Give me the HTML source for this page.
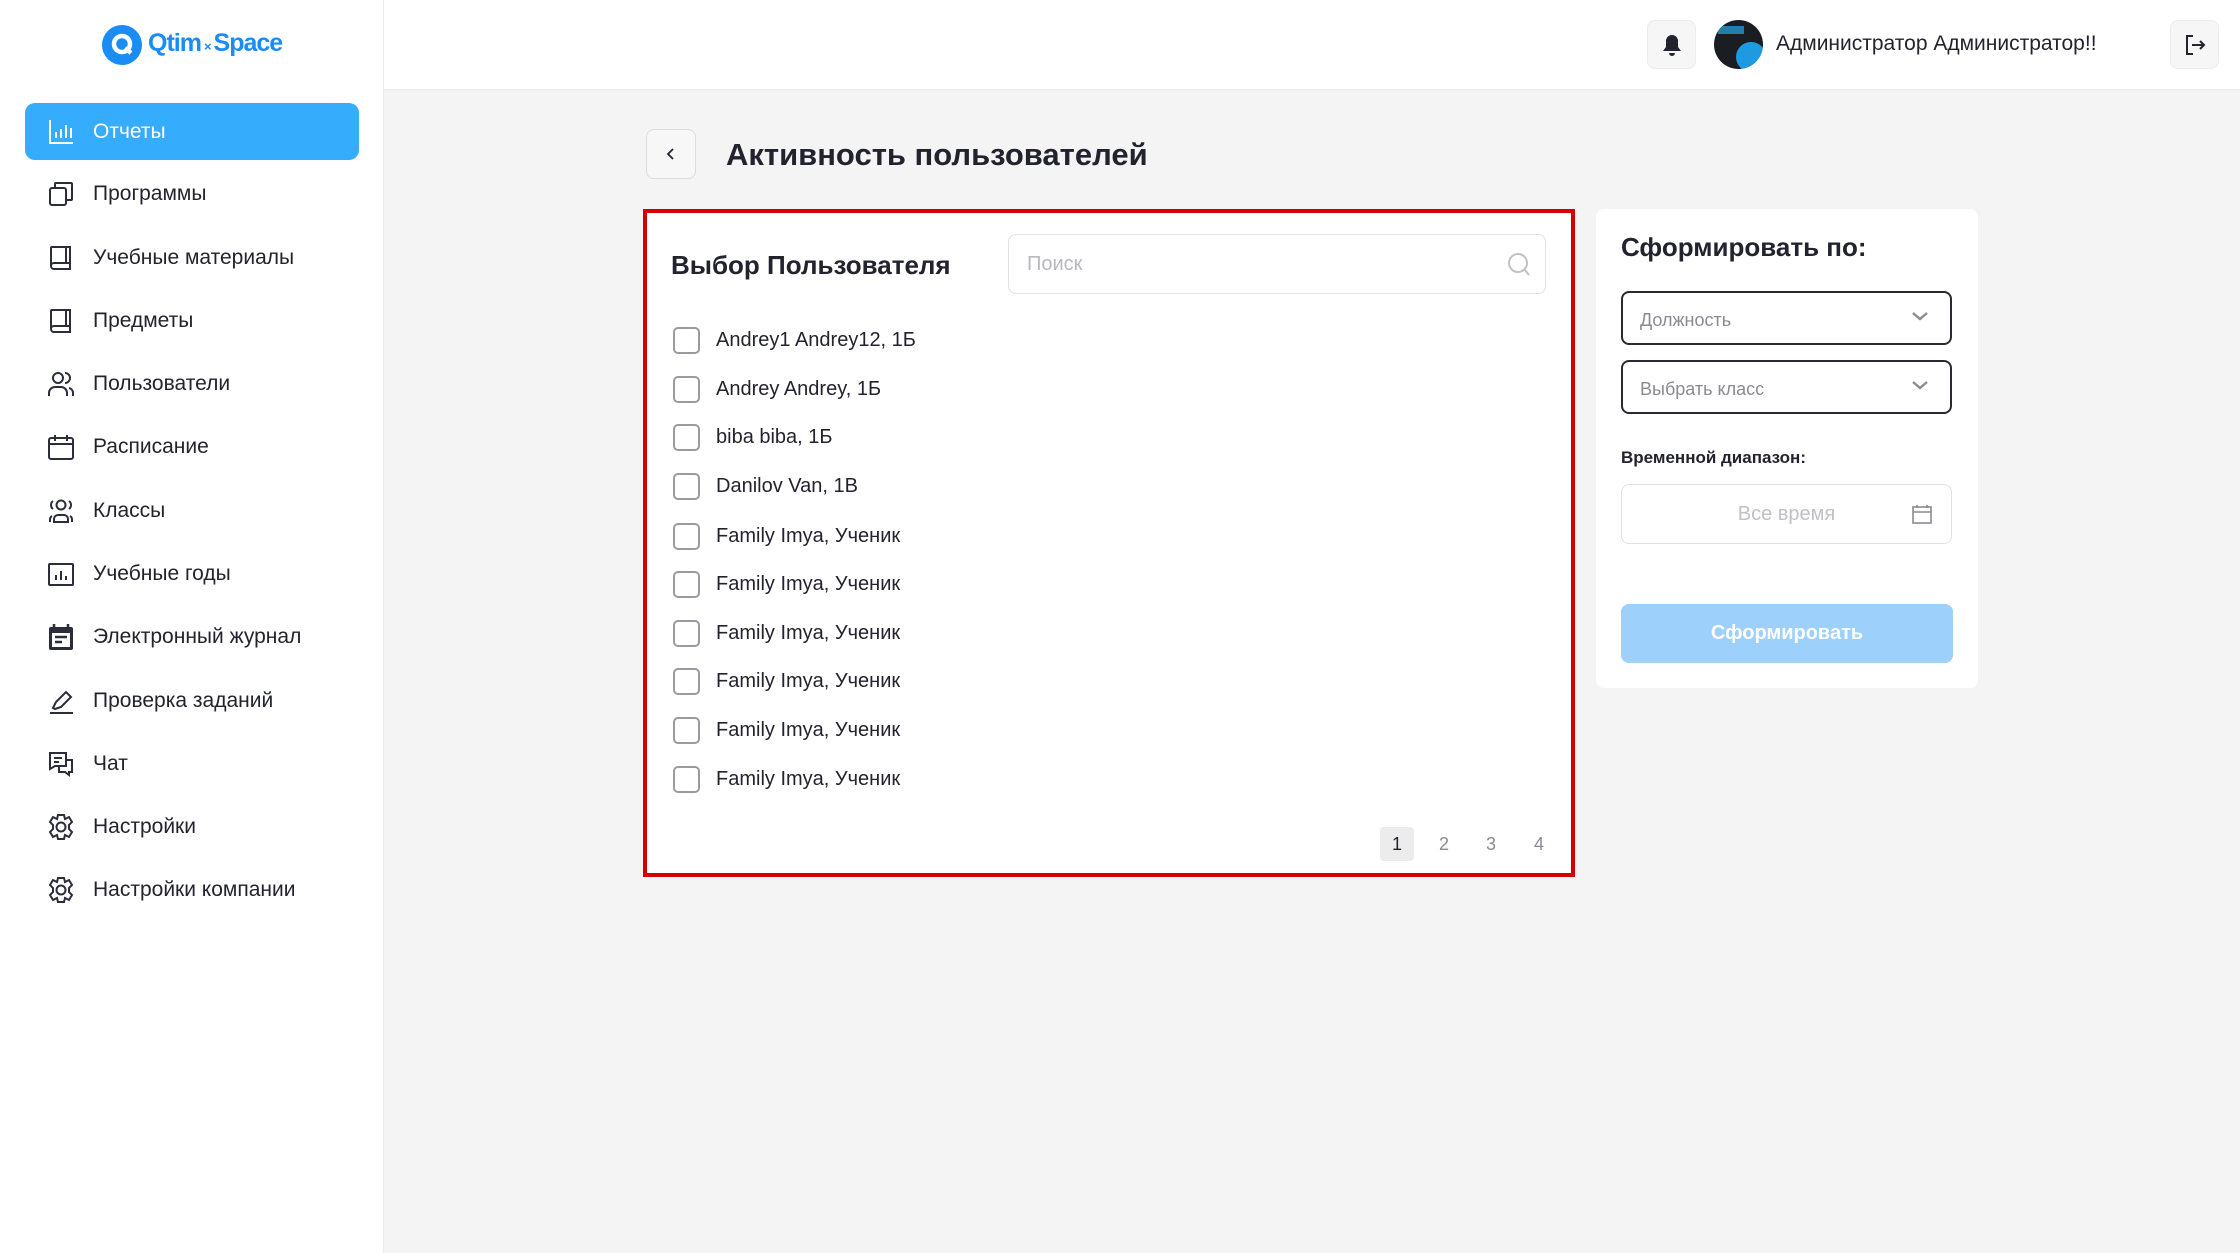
<!DOCTYPE html>
<html><head><meta charset="utf-8"><style>
*{margin:0;padding:0;box-sizing:border-box}
body{width:2240px;height:1253px;background:#f4f4f4;font-family:"Liberation Sans",sans-serif;color:#23232f;position:relative;overflow:hidden}
.abs{position:absolute}
.side{left:0;top:0;width:384px;height:1253px;background:#fff;border-right:1px solid #ececec}
.top{left:384px;top:0;width:1856px;height:90px;background:#fff;border-bottom:1px solid #ececec}
.mi{position:absolute;left:25px;width:334px;height:57px;display:flex;align-items:center;font-size:21px;color:#23232f}
.mi svg{position:absolute;left:22px;top:15px;width:28px;height:28px}
.mi span{position:absolute;left:68px}
.act{background:#35acfc;border-radius:10px;color:#fff}
.cb{position:absolute;left:673px;width:27px;height:27px;border:2px solid #9a9aa2;border-radius:5px;background:#fff}
.ct{position:absolute;left:716px;font-size:20px;color:#23232f}
.sel{position:absolute;left:1621px;width:331px;height:54px;border:2px solid #2a2a35;border-radius:8px;font-size:18px;color:#8a8a95;padding:17px 0 0 17px}
.sel svg{position:absolute;right:20px;top:16px}
.pg{position:absolute;top:827px;width:34px;height:34px;font-size:18px;color:#8a8a95;text-align:center;line-height:34px;border-radius:4px}
</style></head><body>
<div class="abs side">
  <svg class="abs" style="left:101px;top:24px" width="42" height="42" viewBox="0 0 42 42"><circle cx="21" cy="21" r="20" fill="#1a8cf5"/><circle cx="21" cy="20" r="8" fill="none" stroke="#fff" stroke-width="4.5"/><path d="M24 24 L30 29" stroke="#fff" stroke-width="4.5"/></svg>
  <div class="abs" style="left:148px;top:29px;font-size:25px;font-weight:bold;color:#1a8cf5;letter-spacing:-1px">Qtim<span style="font-size:13px;margin:0 3px">×</span>Space</div>
  <div class="mi act" style="top:103px"><svg viewBox="0 0 28 28" fill="none" stroke="#fff" stroke-width="2"><path d="M3 2v23h23M9 20v-6M14 20v-9M19 20v-13M24 20v-10"/></svg><span>Отчеты</span></div>
  <div class="mi" style="top:165px"><svg viewBox="0 0 28 28" fill="none" stroke="#2b2d3b" stroke-width="2"><rect x="3" y="8" width="16" height="17" rx="2"/><path d="M8 8V4a1 1 0 0 1 1-1h15a1 1 0 0 1 1 1v15a1 1 0 0 1-1 1h-5"/></svg><span>Программы</span></div>
  <div class="mi" style="top:229px"><svg viewBox="0 0 28 28" fill="none" stroke="#2b2d3b" stroke-width="2"><path d="M4 22V4a1 1 0 0 1 1-1h18v22H7a3 3 0 0 1-3-3zM4 22a3 3 0 0 1 3-3h16M19 3v16"/></svg><span>Учебные материалы</span></div>
  <div class="mi" style="top:292px"><svg viewBox="0 0 28 28" fill="none" stroke="#2b2d3b" stroke-width="2"><path d="M4 22V4a1 1 0 0 1 1-1h18v22H7a3 3 0 0 1-3-3zM4 22a3 3 0 0 1 3-3h16M19 3v16"/></svg><span>Предметы</span></div>
  <div class="mi" style="top:355px"><svg viewBox="0 0 28 28" fill="none" stroke="#2b2d3b" stroke-width="2"><circle cx="11" cy="8" r="5"/><path d="M2 26v-3a6 6 0 0 1 6-6h6a6 6 0 0 1 6 6v3M18 3a5 5 0 0 1 0 10M22 18a5 5 0 0 1 4 5v3"/></svg><span>Пользователи</span></div>
  <div class="mi" style="top:418px"><svg viewBox="0 0 28 28" fill="none" stroke="#2b2d3b" stroke-width="2"><rect x="2" y="5" width="24" height="21" rx="2"/><path d="M2 11h24M8 2v6M20 2v6"/></svg><span>Расписание</span></div>
  <div class="mi" style="top:482px"><svg viewBox="0 0 28 28" fill="none" stroke="#2b2d3b" stroke-width="2"><circle cx="14" cy="8" r="4.5"/><path d="M7 25v-3a4 4 0 0 1 4-4h6a4 4 0 0 1 4 4v3zM6 4a5 5 0 0 0 0 8M22 4a5 5 0 0 1 0 8M3 25v-3a4 4 0 0 1 2-3M25 25v-3a4 4 0 0 0-2-3"/></svg><span>Классы</span></div>
  <div class="mi" style="top:545px"><svg viewBox="0 0 28 28" fill="none" stroke="#2b2d3b" stroke-width="2"><rect x="2" y="4" width="24" height="21" rx="1"/><path d="M9 20v-5M14 20v-9M19 20v-4"/></svg><span>Учебные годы</span></div>
  <div class="mi" style="top:608px"><svg viewBox="0 0 28 28"><rect x="2" y="4" width="24" height="23" rx="2" fill="#2b2d3b"/><rect x="5" y="10" width="18" height="14" fill="#fff"/><path d="M8 14h12M8 19h7" stroke="#2b2d3b" stroke-width="2.5"/><path d="M7 1v5M21 1v5" stroke="#2b2d3b" stroke-width="2.5"/></svg><span>Электронный журнал</span></div>
  <div class="mi" style="top:672px"><svg viewBox="0 0 28 28" fill="none" stroke="#2b2d3b" stroke-width="2"><path d="M3 26h23M6 21l3-6L19 5l5 5-10 10-6 2z"/></svg><span>Проверка заданий</span></div>
  <div class="mi" style="top:735px"><svg viewBox="0 0 28 28" fill="none" stroke="#2b2d3b" stroke-width="2"><path d="M3 3h16v13H8l-5 3zM7 8h8M7 12h5M19 10h6v12h-3v3l-4-3h-6v-6"/></svg><span>Чат</span></div>
  <div class="mi" style="top:798px"><svg viewBox="0 0 28 28" fill="none" stroke="#2b2d3b" stroke-width="2"><circle cx="14" cy="14" r="4.5"/><path d="M11 2h6l1 4 4-2 3 5-3 3v4l3 3-3 5-4-2-1 4h-6l-1-4-4 2-3-5 3-3v-4L3 9l3-5 4 2z"/></svg><span>Настройки</span></div>
  <div class="mi" style="top:861px"><svg viewBox="0 0 28 28" fill="none" stroke="#2b2d3b" stroke-width="2"><circle cx="14" cy="14" r="4.5"/><path d="M11 2h6l1 4 4-2 3 5-3 3v4l3 3-3 5-4-2-1 4h-6l-1-4-4 2-3-5 3-3v-4L3 9l3-5 4 2z"/></svg><span>Настройки компании</span></div>
</div>
<div class="abs top"></div>
<div class="abs" style="left:1647px;top:20px;width:49px;height:49px;background:#f6f6f7;border:1px solid #ececec;border-radius:8px"><svg style="position:absolute;left:14px;top:13px" width="20" height="22" viewBox="0 0 20 22"><path d="M10 1a6 6 0 0 0-6 6v6l-3 4h18l-3-4V7a6 6 0 0 0-6-6z" fill="#23232f"/><path d="M7 19a3 3 0 0 0 6 0z" fill="#23232f"/></svg></div>
<div class="abs" style="left:1714px;top:20px;width:49px;height:49px;border-radius:50%;background:#1a1d22;overflow:hidden"><div style="position:absolute;left:22px;top:22px;width:30px;height:30px;border-radius:50%;background:#1e9be0"></div><div style="position:absolute;left:4px;top:6px;width:26px;height:8px;background:#2aa8e8;opacity:.7"></div></div>
<div class="abs" style="left:1776px;top:32px;font-size:21px;color:#23232f">Администратор Администратор!!</div>
<div class="abs" style="left:2170px;top:20px;width:49px;height:49px;background:#f6f6f7;border:1px solid #ececec;border-radius:8px"><svg style="position:absolute;left:13px;top:13px" width="22" height="22" viewBox="0 0 22 22" fill="none" stroke="#23232f" stroke-width="2"><path d="M9 2H3v18h6M8 11h12M16 7l4 4-4 4"/></svg></div>

<div class="abs" style="left:646px;top:129px;width:50px;height:50px;background:#f7f7f7;border:1px solid #dcdcdc;border-radius:8px"><svg style="position:absolute;left:18px;top:17px" width="12" height="14" viewBox="0 0 12 14" fill="none" stroke="#23232f" stroke-width="1.8"><path d="M8 2L3 7l5 5"/></svg></div>
<div class="abs" style="left:726px;top:137px;font-size:31px;font-weight:bold;color:#23232f">Активность пользователей</div>

<div class="abs" style="left:643px;top:209px;width:932px;height:668px;background:#fff;border:4px solid #d40000"></div>
<div class="abs" style="left:671px;top:250px;font-size:26px;font-weight:bold">Выбор Пользователя</div>
<div class="abs" style="left:1008px;top:234px;width:538px;height:60px;border:1px solid #e2e2e2;border-radius:8px;background:#fff"><span style="position:absolute;left:18px;top:18px;font-size:20px;color:#b8b8c0">Поиск</span><svg style="position:absolute;right:14px;top:17px" width="24" height="26" viewBox="0 0 24 26" fill="none" stroke="#c0c0c8" stroke-width="2"><circle cx="11" cy="11" r="9"/><path d="M18 18l4 5"/></svg></div>
<div class="cb" style="top:327px"></div><div class="ct" style="top:329px">Andrey1 Andrey12, 1Б</div>
<div class="cb" style="top:376px"></div><div class="ct" style="top:378px">Andrey Andrey, 1Б</div>
<div class="cb" style="top:424px"></div><div class="ct" style="top:426px">biba biba, 1Б</div>
<div class="cb" style="top:473px"></div><div class="ct" style="top:475px">Danilov Van, 1В</div>
<div class="cb" style="top:523px"></div><div class="ct" style="top:525px">Family Imya, Ученик</div>
<div class="cb" style="top:571px"></div><div class="ct" style="top:573px">Family Imya, Ученик</div>
<div class="cb" style="top:620px"></div><div class="ct" style="top:622px">Family Imya, Ученик</div>
<div class="cb" style="top:668px"></div><div class="ct" style="top:670px">Family Imya, Ученик</div>
<div class="cb" style="top:717px"></div><div class="ct" style="top:719px">Family Imya, Ученик</div>
<div class="cb" style="top:766px"></div><div class="ct" style="top:768px">Family Imya, Ученик</div>
<div class="pg" style="left:1380px;background:#ececec;color:#23232f">1</div>
<div class="pg" style="left:1427px">2</div>
<div class="pg" style="left:1474px">3</div>
<div class="pg" style="left:1522px">4</div>

<div class="abs" style="left:1596px;top:209px;width:382px;height:479px;background:#fff;border-radius:8px"></div>
<div class="abs" style="left:1621px;top:232px;font-size:26px;font-weight:bold">Сформировать по:</div>
<div class="sel" style="top:291px">Должность<svg width="20" height="14" viewBox="0 0 20 14" fill="none" stroke="#8a8a95" stroke-width="2.4"><path d="M3 4l7 6 7-6"/></svg></div>
<div class="sel" style="top:360px">Выбрать класс<svg width="20" height="14" viewBox="0 0 20 14" fill="none" stroke="#8a8a95" stroke-width="2.4"><path d="M3 4l7 6 7-6"/></svg></div>
<div class="abs" style="left:1621px;top:448px;font-size:17px;font-weight:bold;color:#23232f">Временной диапазон:</div>
<div class="abs" style="left:1621px;top:484px;width:331px;height:60px;border:1px solid #e2e2e2;border-radius:8px;background:#fff"><span style="position:absolute;left:0;width:100%;text-align:center;top:18px;font-size:20px;color:#c0c0c8">Все время</span><svg style="position:absolute;right:19px;top:20px" width="20" height="19" viewBox="0 0 20 19" fill="none" stroke="#8a8a95" stroke-width="1.6"><rect x="1" y="2" width="18" height="16"/><path d="M1 7h18M5 0v3M15 0v3"/></svg></div>
<div class="abs" style="left:1621px;top:604px;width:332px;height:59px;background:#9dd0fb;border-radius:8px;color:#fff;font-size:20px;font-weight:bold;text-align:center;line-height:59px">Сформировать</div>
</body></html>
